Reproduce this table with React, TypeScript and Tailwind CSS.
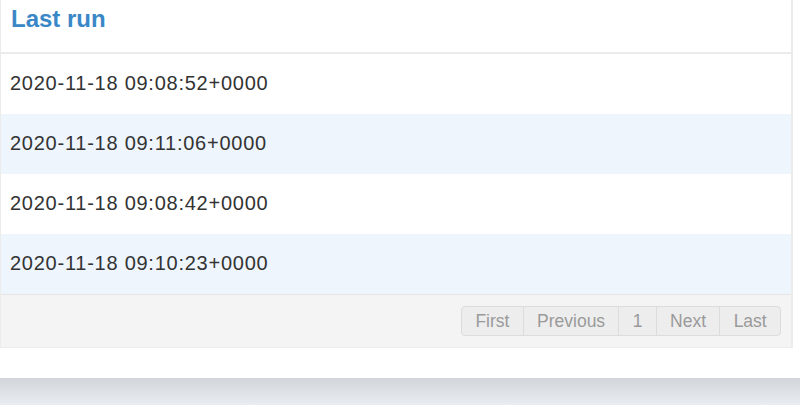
import React from 'react';

const runs = [
    '2020-11-18 09:08:52+0000',
    '2020-11-18 09:11:06+0000',
    '2020-11-18 09:08:42+0000',
    '2020-11-18 09:10:23+0000',
];

const pages = ['First', 'Previous', '1', 'Next', 'Last'];

export default function App() {
    return (
        <div className="w-[800px] h-[405px] bg-white flex flex-col overflow-hidden" style={{ fontFamily: '"Liberation Sans", Arial, sans-serif' }}>
            {/* panel */}
            <div className="w-[793px] border-l border-r-2 border-b border-[#ececec] flex flex-col">
                <div className="h-[54px] border-b-2 border-[#ebebeb] px-[10px] pt-[2px]">
                    <h2 className="text-[24px] font-bold text-[#3a87c8] leading-[33px]">Last run</h2>
                </div>

                {runs.map((r, i) => (
                    <div
                        key={i}
                        className={`h-[60px] flex items-center px-[9px] pb-[3px] text-[20px] tracking-[0.75px] text-[#333] ${i % 2 === 1 ? 'bg-[#eef5fd]' : 'bg-white'}`}
                    >
                        {r}
                    </div>
                ))}

                <div className="h-[53px] bg-[#f4f4f5] border-t border-[#e6e6e6] flex items-center justify-end pr-[10px]">
                    <div className="flex h-[30px] rounded-[4px] border border-[#dcdcdc] bg-[#ededed] overflow-hidden">
                        {pages.map((p, i) => (
                            <div
                                key={p}
                                className={`flex items-center px-[13.3px] text-[17.5px] text-[#9a9a9a] ${i > 0 ? 'border-l border-[#dcdcdc]' : ''}`}
                            >
                                {p}
                            </div>
                        ))}
                    </div>
                </div>
            </div>

            {/* page background below */}
            <div className="h-[30px]" />
            <div className="flex-1 bg-gradient-to-b from-[#d2d5da] to-[#e9ecf0]" />
        </div>
    );
}
